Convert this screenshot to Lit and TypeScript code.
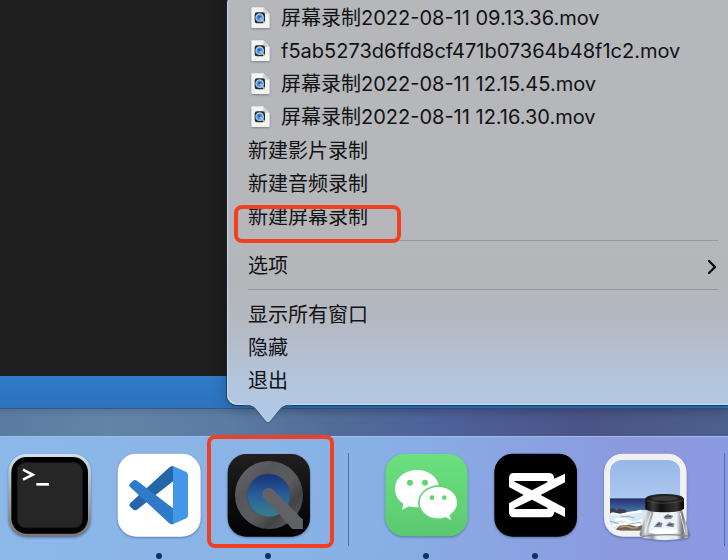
import { LitElement, html, css, svg, nothing } from "lit";
import { customElement, property } from "lit/decorators.js";

type Entry =
  | { kind: "file"; label: string }
  | { kind: "action"; label: string; marked?: boolean; submenu?: boolean }
  | { kind: "rule" };

const ENTRIES: Entry[] = [
  { kind: "file", label: "屏幕录制2022-08-11 09.13.36.mov" },
  { kind: "file", label: "f5ab5273d6ffd8cf471b07364b48f1c2.mov" },
  { kind: "file", label: "屏幕录制2022-08-11 12.15.45.mov" },
  { kind: "file", label: "屏幕录制2022-08-11 12.16.30.mov" },
  { kind: "action", label: "新建影片录制" },
  { kind: "action", label: "新建音频录制" },
  { kind: "action", label: "新建屏幕录制", marked: true },
  { kind: "rule" },
  { kind: "action", label: "选项", submenu: true },
  { kind: "rule" },
  { kind: "action", label: "显示所有窗口" },
  { kind: "action", label: "隐藏" },
  { kind: "action", label: "退出" },
];

const fileIcon = html`<svg class="doc" viewBox="93 21 57 63" aria-hidden="true">
  <path d="M97 22H130L149 41V81Q149 84 146 84H97Q94 84 94 81V25Q94 22 97 22Z" fill="#f3f3f3" />
  <path d="M130 22L149 41H133Q130 41 130 38Z" fill="#d2d3d6" />
  <rect x="104" y="37" width="31" height="33" rx="7" fill="#252a31" />
  <circle cx="119" cy="53" r="11" fill="#3795ee" stroke="#b9c3cc" stroke-width="4" />
  <path d="M119 53L133 67" stroke="#b9c3cc" stroke-width="5" stroke-linecap="round" />
  <circle cx="118" cy="51" r="4" fill="#1d5fc8" />
</svg>`;

const terminal = svg`
  <defs>
    <linearGradient id="rim" x1="0" y1="0" x2="0" y2="1">
      <stop offset="0" stop-color="#cfe3ea" /><stop offset=".45" stop-color="#a3adb3" /><stop offset="1" stop-color="#77767a" />
    </linearGradient>
  </defs>
  <rect x="25" y="72" width="248" height="248" rx="54" fill="url(#rim)" />
  <rect x="34" y="81" width="230" height="230" rx="46" fill="#000" />
  <rect x="52" y="98" width="195" height="195" rx="24" fill="#262626" stroke="#1a1a1a" stroke-width="3" />
  <path d="M69 119L98 134L69 149" fill="none" stroke="#fff" stroke-width="8" />
  <path d="M109 163H147" stroke="#fff" stroke-width="8" />`;

const code = svg`
  <rect x="353" y="71" width="249" height="249" rx="56" fill="#fff" />
  <path d="M519 108V154L411 239Q404 243 399 238L389 229Q386 224 391 219L506 114Q512 108 519 108Z" fill="#2665a8" />
  <path d="M519 283V235L411 152Q404 148 399 153L389 162Q386 167 391 172L506 278Q512 284 519 283Z" fill="#2f7bc9" />
  <path d="M519 108L559 126Q564 129 564 134V257Q564 262 559 265L519 283Z" fill="#4496e8" />`;

const quicktime = svg`
  <defs>
    <linearGradient id="qbg" x1="0" y1="0" x2="0" y2="1">
      <stop offset="0" stop-color="#202021" /><stop offset=".6" stop-color="#0c0c0d" /><stop offset="1" stop-color="#030303" />
    </linearGradient>
    <linearGradient id="qring" x1="0" y1="0" x2="1" y2="1">
      <stop offset="0" stop-color="#6b6d72" /><stop offset=".3" stop-color="#54565a" />
      <stop offset=".55" stop-color="#5b5c60" /><stop offset=".72" stop-color="#424347" /><stop offset="1" stop-color="#636468" />
    </linearGradient>
    <linearGradient id="qlens" x1="0" y1="0" x2="0" y2="1">
      <stop offset="0" stop-color="#183278" /><stop offset=".5" stop-color="#285f99" /><stop offset="1" stop-color="#37808a" />
    </linearGradient>
  </defs>
  <rect x="83" y="72" width="247" height="248" rx="56" fill="url(#qbg)" />
  <circle cx="207" cy="195" r="102" fill="url(#qring)" />
  <path d="M256 228L291 255L308 268V297H278L240 258Z" fill="#5c5d61" />
  <circle cx="206" cy="196" r="65" fill="url(#qlens)" stroke="#474b55" stroke-width="2" />
  <path d="M206 193L281 268" stroke="#606267" stroke-width="38" stroke-linecap="round" />
  <path d="M291 255L308 268V297H278L266 285Z" fill="#606166" />`;

const wechat = svg`
  <defs>
    <linearGradient id="wbg" x1="0" y1="0" x2="0" y2="1">
      <stop offset="0" stop-color="#6be07f" /><stop offset="1" stop-color="#5cc970" />
    </linearGradient>
  </defs>
  <rect x="46" y="72" width="247" height="247" rx="56" fill="url(#wbg)" />
  <path d="M141 120C104 120 75 145 75 177C75 195 84 211 100 221L96 239L117 229C125 231 133 232 145 232C178 230 208 206 208 177C208 145 178 120 141 120Z" fill="#fff" />
  <ellipse cx="205" cy="218" rx="61" ry="52" fill="#64d377" />
  <path d="M205 171C173 171 149 192 149 218C149 244 173 265 205 265C213 265 220 264 226 261L243 270L239 254C253 245 261 233 261 218C261 192 237 171 205 171Z" fill="#fff" />
  <circle cx="120" cy="158" r="9" fill="#64d377" /><circle cx="165" cy="158" r="9" fill="#64d377" />
  <circle cx="186" cy="203" r="7" fill="#64d377" /><circle cx="223" cy="203" r="7" fill="#64d377" />`;

const capcut = svg`
  <rect x="373" y="71" width="248" height="249" rx="56" fill="#000" />
  <path d="M432 129H536Q552 129 553 146L585 131V157L512 195L585 234V261L553 245Q552 262 536 262H432Q417 262 417 247V220L461 195L417 171V144Q417 129 432 129Z" fill="#fff" />
  <path d="M433 153H532V157L486 181L433 155Z" fill="#000" />
  <path d="M433 237V235L486 209L532 233V237Z" fill="#000" />`;

const preview = svg`
  <defs>
    <linearGradient id="sky" x1="0" y1="0" x2="0" y2="1">
      <stop offset="0" stop-color="#96b7e8" /><stop offset="1" stop-color="#abc8ef" />
    </linearGradient>
    <linearGradient id="sea" x1="0" y1="0" x2="0" y2="1">
      <stop offset="0" stop-color="#252f70" /><stop offset=".35" stop-color="#40699f" /><stop offset="1" stop-color="#a5cadd" />
    </linearGradient>
    <linearGradient id="cap" x1="0" y1="0" x2="1" y2="0">
      <stop offset="0" stop-color="#070707" /><stop offset=".2" stop-color="#3c3c3c" /><stop offset=".4" stop-color="#101010" />
      <stop offset=".8" stop-color="#353535" /><stop offset="1" stop-color="#050505" />
    </linearGradient>
    <linearGradient id="glass" x1="0" y1="0" x2="1" y2="0">
      <stop offset="0" stop-color="#777c80" /><stop offset=".12" stop-color="#d6dadd" /><stop offset=".25" stop-color="#94999d" />
      <stop offset=".35" stop-color="#edf2f5" /><stop offset=".75" stop-color="#e4e9ed" /><stop offset=".86" stop-color="#71767a" />
      <stop offset=".94" stop-color="#c4c8ca" /><stop offset="1" stop-color="#55595c" />
    </linearGradient>
    <clipPath id="photo"><rect x="90" y="90" width="211" height="212" rx="36" /></clipPath>
  </defs>
  <rect x="72" y="71" width="248" height="249" rx="56" fill="#f1f1f2" />
  <g clip-path="url(#photo)">
    <rect x="90" y="90" width="211" height="116" fill="url(#sky)" />
    <rect x="90" y="205" width="211" height="97" fill="url(#sea)" />
    <path d="M90 252Q115 242 140 250L180 239L301 250V302H90Z" fill="#d9e9f1" />
    <path d="M90 247Q108 254 130 251T185 244M105 271Q126 262 146 273T185 270M95 288Q130 276 180 285" fill="none" stroke="#fff" stroke-width="7" />
    <path d="M122 261Q145 256 164 264M90 274L116 281M146 282L182 277" fill="none" stroke="#87b7ce" stroke-width="3" />
    <path d="M90 236L101 234L109 241L116 235L137 239L141 247L119 251L101 247L90 249Z" fill="#3d3d4b" />
    <path d="M106 299L119 287L147 284L171 290L186 286V302H105Z" fill="#75634f" />
    <path d="M118 292L137 288L158 294L174 293" fill="none" stroke="#b59b74" stroke-width="4" />
  </g>
  <path d="M202 240L179 311Q178 321 193 325Q254 336 316 325Q331 321 328 311L306 240Z" fill="url(#glass)" />
  <path d="M221 246L205 301Q247 311 291 302L290 246Z" fill="#edf3f7" />
  <path d="M207 302Q245 292 289 300Q298 306 285 310Q249 316 211 310Q203 307 207 302Z" fill="#fff" />
  <path d="M188 319Q251 309 322 318" fill="none" stroke="#83888b" stroke-width="4" />
  <path d="M250 260L263 252L280 258L273 267L255 268ZM221 291L235 275L248 279L244 292ZM257 288L267 276L284 281L280 292Z" fill="#858a98" />
  <path d="M256 260L273 259M230 286L240 281M265 285L277 284" stroke="#4a4f60" stroke-width="4" />
  <path d="M213 247L194 309M301 249L315 308" stroke="#fff" stroke-width="3" opacity=".75" />
  <path d="M196 207Q198 193 254 192Q310 193 312 207V235Q306 247 254 247Q201 247 196 235Z" fill="url(#cap)" />
  <ellipse cx="254" cy="204" rx="53" ry="11" fill="#202020" />
  <ellipse cx="254" cy="205" rx="40" ry="7" fill="#3b3b3b" />
  <path d="M198 211Q220 221 254 220T310 211" fill="none" stroke="#505050" stroke-width="2" />`;

interface App {
  name: string;
  art: unknown;
  box: string;
  running?: boolean;
  marked?: boolean;
}

const LEFT_APPS: App[] = [
  { name: "Terminal", art: terminal, box: "24 72 249 249" },
  { name: "Visual Studio Code", art: code, box: "351 72 249 249", running: true },
  { name: "QuickTime Player", art: quicktime, box: "78 72 249 249", running: true, marked: true },
];
const RIGHT_APPS: App[] = [
  { name: "WeChat", art: wechat, box: "42 72 249 249", running: true },
  { name: "CapCut", art: capcut, box: "369 72 249 249", running: true },
  { name: "Preview", art: preview, box: "66 72 249 249" },
];

@customElement("dock-app")
export class DockApp extends LitElement {
  @property({ attribute: false }) app!: App;

  static styles = css`
    :host { display: block; flex: none; }
    .app {
      position: relative; display: flex; flex-direction: column; align-items: center; gap: 16px;
      width: 83px; padding: 0; border: 0; background: none;
    }
    .art { display: block; width: 83px; height: 83px; overflow: visible; filter: drop-shadow(0 1px 1px rgb(20 35 80 / .4)); }
    .dot { width: 6px; height: 6px; border-radius: 50%; background: #10306a; }
    .mark { position: absolute; inset: -19px -25px 11px -19px; border: 4px solid #f03f23; border-radius: 8px; }
  `;

  render() {
    const a = this.app;
    return html`<button class="app" aria-label=${a.name}>
      <svg class="art" viewBox=${a.box} aria-hidden="true">${a.art}</svg>
      ${a.running ? html`<span class="dot"></span>` : nothing}
      ${a.marked ? html`<span class="mark"></span>` : nothing}
    </button>`;
  }
}

@customElement("dock-menu")
export class DockMenu extends LitElement {
  static styles = css`
    :host {
      display: block; box-sizing: border-box; padding: 8px 10px 8px 21px;
      border-radius: 10px;
      background: linear-gradient(to top, #b3c8e4 0, #b3c5dc 24px, #b5bdcc 60px, #b4b8c0 90px, #b4b7b9 125px, #b5b7ba 180px, #b6b7bb 260px);
      box-shadow: inset 1px -1px 0 rgb(222 230 240 / .6), 0 0 0 1px rgb(10 35 70 / .6), 0 2px 16px rgb(0 0 0 / .28);
      font: 20px/33px Inter, "Noto Sans CJK SC", sans-serif; font-variation-settings: "opsz" 32; color: #111214;
    }
    .list { display: flex; flex-direction: column; }
    .item {
      position: relative; display: flex; align-items: center; box-sizing: border-box; width: 100%; height: 33px;
      padding: 0; border: 0; background: none; font: inherit; font-variation-settings: inherit; color: inherit;
      text-align: left; white-space: nowrap;
    }
    .action { padding-top: 2px; }
    .label { flex: 1; }
    .doc { width: 19px; height: 21px; margin: 0 11px 2px 3px; filter: drop-shadow(0 1px 1px rgb(0 0 0 / .3)); }
    .rule { height: 1px; margin: 7px 0 8px; border: 0; background: #94979b; }
    .chevron { width: 10px; height: 16px; margin-right: 1px; }
    .mark { position: absolute; inset: 5px auto -10px -14px; width: 159px; border: 4px solid #f03f23; border-radius: 8px; }
    .tail { position: absolute; top: 100%; left: 18px; width: 46px; height: 20px; margin-top: -1px; }
  `;

  private entry(e: Entry) {
    if (e.kind === "rule") return html`<hr class="rule" />`;
    if (e.kind === "file")
      return html`<button class="item" role="menuitem">${fileIcon}<span class="label">${e.label}</span></button>`;
    return html`<button class="item action" role="menuitem">
      <span class="label">${e.label}</span>
      ${e.submenu
        ? html`<svg class="chevron" viewBox="0 0 10 16" aria-hidden="true">
            <path d="M2 2L8 8L2 14" fill="none" stroke="#0b0b0c" stroke-width="2.4" stroke-linecap="round" stroke-linejoin="round" />
          </svg>`
        : nothing}
      ${e.marked ? html`<span class="mark"></span>` : nothing}
    </button>`;
  }

  render() {
    return html`<div class="list" role="menu">${ENTRIES.map((e) => this.entry(e))}</div>
      <svg class="tail" viewBox="0 0 46 20" aria-hidden="true">
        <path d="M0 0H46V1C40 1 38 2 35 5L25 18Q23 20 21 18L11 5C8 2 6 1 0 1Z" fill="#b3c8e4" />
        <path d="M0 1.500C6 1.500 8 2.500 11 5.500L21 18Q23 20 25 18L35 5.500C38 2.500 40 1.500 46 1.500" fill="none" stroke="#35547f" stroke-width="1" />
      </svg>`;
  }
}

@customElement("app-root")
export class AppRoot extends LitElement {
  static styles = css`
    :host { display: block; }
    .desktop {
      position: relative; display: flex; flex-direction: column; min-height: 100vh; overflow: hidden;
      background: linear-gradient(90deg, #5b7ca2 0, #6284a5 15%, #5b7ba3 32%, #526d99 45%, #4e629a 60%, #4b5488 80%, #4c608e 100%);
    }
    .editor { flex: 1; background: #1e1e1e; }
    .status { height: 33px; box-sizing: border-box; background: linear-gradient(#2f7bc8, #2d72bd); border-bottom: 1px solid #315a87; }
    .gap { height: 27px; background: linear-gradient(rgb(20 30 60 / .12), transparent 8px); }
    .dock {
      display: flex; align-items: flex-start; gap: 26px; box-sizing: border-box; height: 124px; padding: 17px 0 1px 8px;
      border-top: 1px solid #a0bce8;
      background: linear-gradient(95deg, #8cb8e9 0, #8ab3e6 35%, #87b0e6 52%, #8aa5e2 68%, #8b9adf 85%, #8c9be1 100%);
    }
    .divider { flex: none; width: 1px; height: 93px; margin: -1px 9px 0 13px; background: #4e6fa5; }
    .menu { position: absolute; left: 227px; right: 0; bottom: 155px; border-top-right-radius: 0; border-bottom-right-radius: 0; }
  `;

  render() {
    return html`<main class="desktop">
      <div class="editor"></div>
      <div class="status"></div>
      <div class="gap"></div>
      <dock-menu class="menu"></dock-menu>
      <nav class="dock" aria-label="Dock">
        ${LEFT_APPS.map((a) => html`<dock-app .app=${a}></dock-app>`)}
        <span class="divider"></span>
        ${RIGHT_APPS.map((a) => html`<dock-app .app=${a}></dock-app>`)}
        <span class="divider"></span>
      </nav>
    </main>`;
  }
}
